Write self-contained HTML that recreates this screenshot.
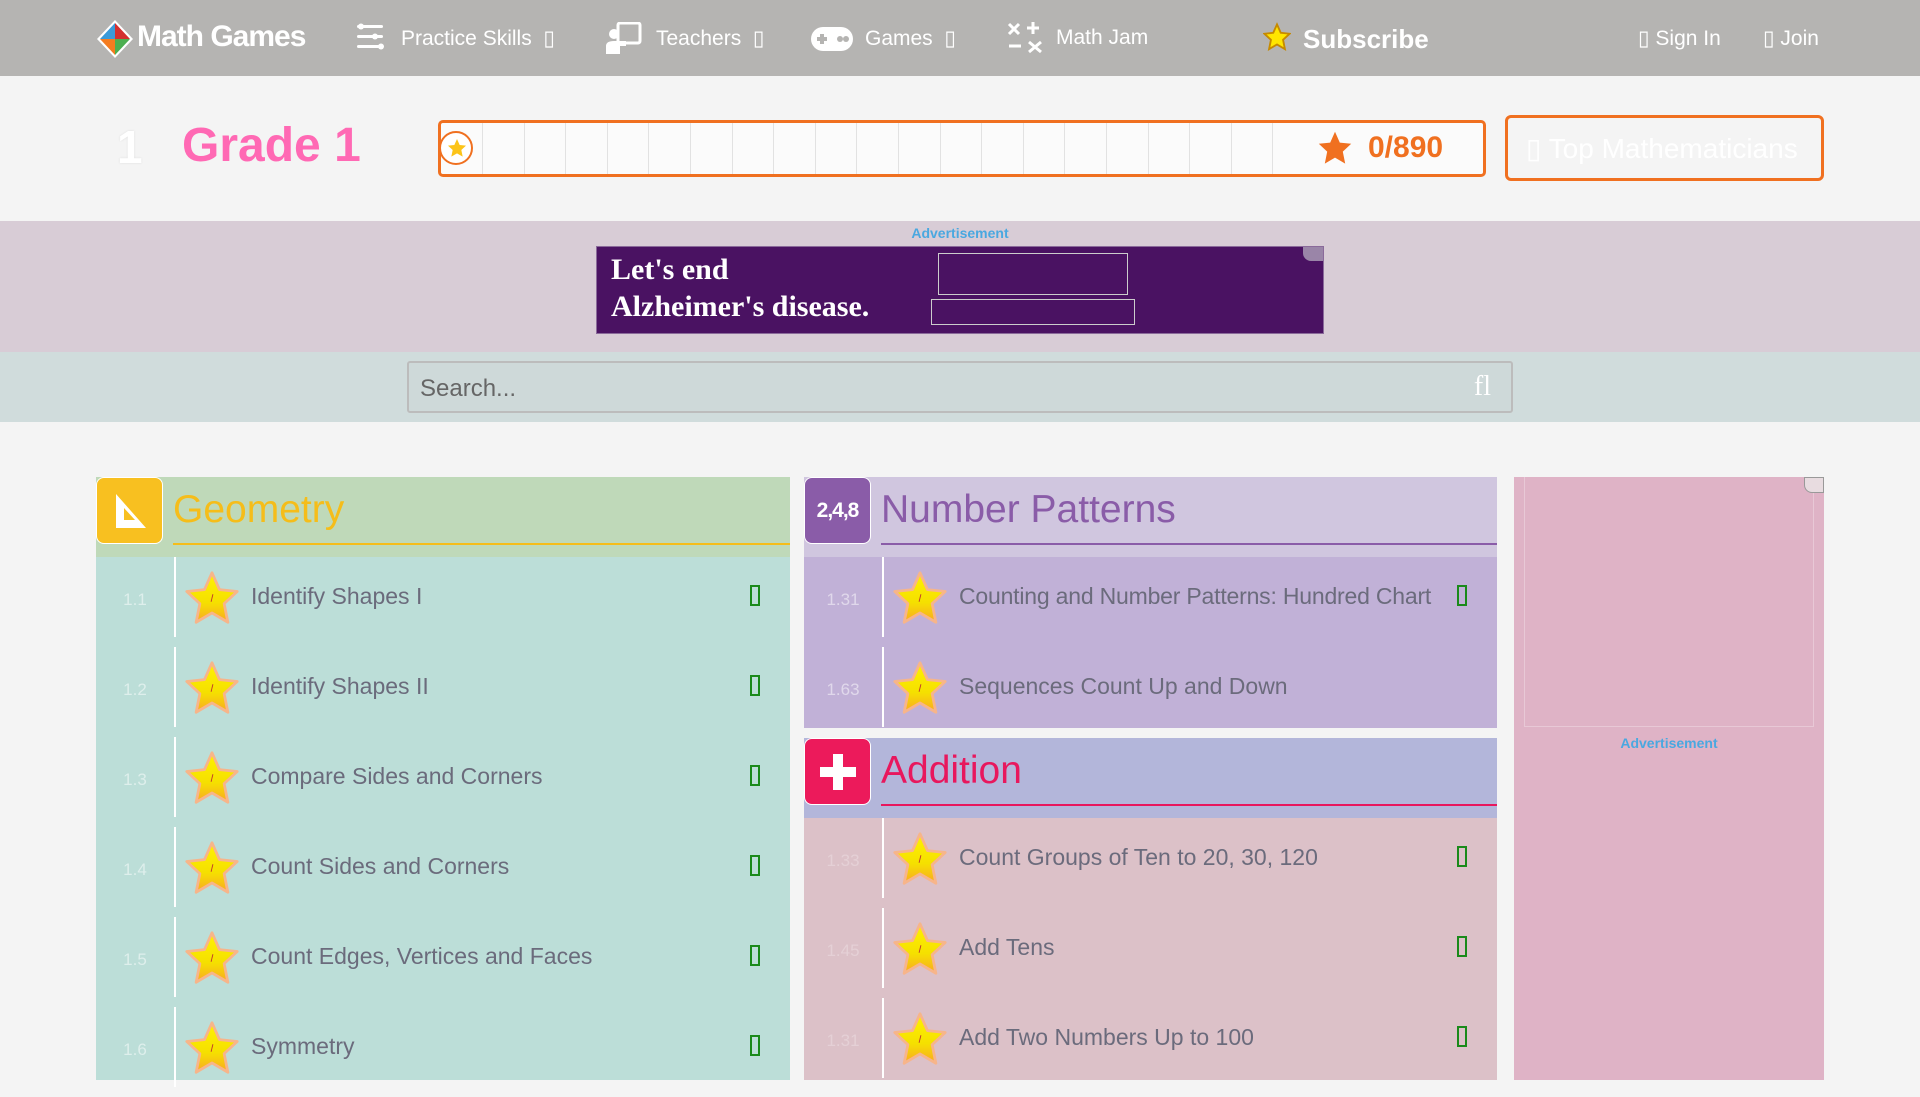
<!DOCTYPE html>
<html><head><meta charset="utf-8"><style>
*{margin:0;padding:0;box-sizing:border-box}
body{width:1920px;height:1080px;overflow:hidden;background:#f4f4f4;font-family:"Liberation Sans",sans-serif;position:relative}
.a{position:absolute}
.nav{left:0;top:0;width:1920px;height:76px;background:#b5b4b2;color:#fff;font-size:21px}
.nav span{position:absolute;top:26px;white-space:nowrap}
.cell{position:absolute;top:0;width:41.6px;height:51px;border-left:1px solid #e2e2e2}
.panel{position:absolute}
.hdr{position:absolute;left:0;top:0;height:80px}
.ico{position:absolute;left:0;top:0;width:67px;height:67px;border-radius:8px;border:1px solid #fff}
.ttl{position:absolute;left:77px;top:11px;font-size:39px}
.uline{position:absolute;left:77px;right:0;top:66px;height:2px}
.row{position:absolute;left:0;height:90px;width:100%}
.row .num{position:absolute;left:0;width:78px;top:33px;text-align:center;font-size:17px;color:rgba(255,255,255,.5)}
.row .ln{position:absolute;left:78px;top:0;width:2px;height:80px;background:#fff}
.row .st{position:absolute;left:88px;top:13px}
.row .tx{position:absolute;left:155px;top:26px;font-size:23px;color:#6b6b7c;white-space:nowrap}
.row .gi{position:absolute;right:30px;top:28px;width:10px;height:21px;border:2px solid #1a8a1a}
</style></head><body>
<svg width="0" height="0" style="position:absolute"><defs>
<linearGradient id="sg" x1="0" y1="0" x2="0" y2="1"><stop offset="0" stop-color="#fff200"/><stop offset=".6" stop-color="#f5e000"/><stop offset="1" stop-color="#f9a825"/></linearGradient>
<symbol id="star" viewBox="0 0 60 60"><path d="M30 3 L38 21 L57 23 L43 36 L47 56 L30 46 L13 56 L17 36 L3 23 L22 21 Z" fill="url(#sg)" stroke="#f7b58a" stroke-width="3" stroke-linejoin="round"/><path d="M31 26 L29 34" stroke="#c0392b" stroke-width="1"/></symbol>
</defs></svg>

<div class="a nav">
 <svg class="a" style="left:96px;top:19px" width="38" height="40" viewBox="0 0 38 40"><path d="M19 1 L37 20 L19 39 L1 20Z" fill="#fff"/><path d="M19 4 L19 20 L4 20Z" fill="#3a9ad9"/><path d="M19 4 L34 20 L19 20Z" fill="#d32f2f"/><path d="M4 20 L19 20 L19 36Z" fill="#f47c20"/><path d="M34 20 L19 20 L19 36Z" fill="#4caf50"/></svg>
 <span style="left:137px;top:20px;font-size:30px;font-weight:bold;letter-spacing:-1px">Math Games</span>
 <svg class="a" style="left:355px;top:22px" width="30" height="30" viewBox="0 0 30 30" fill="#fff"><rect x="2" y="3" width="26" height="3" rx="1.5"/><circle cx="6" cy="4.5" r="3"/><rect x="2" y="13" width="26" height="3" rx="1.5"/><circle cx="20" cy="14.5" r="3"/><rect x="2" y="23" width="26" height="3" rx="1.5"/><circle cx="26" cy="24.5" r="3"/></svg>
 <span style="left:401px">Practice Skills &nbsp;▯</span>
 <svg class="a" style="left:606px;top:22px" width="36" height="32" viewBox="0 0 36 32" fill="#fff"><rect x="12" y="1" width="22" height="20" rx="2" fill="none" stroke="#fff" stroke-width="3"/><circle cx="8" cy="12" r="5"/><path d="M0 32 V24 Q0 19 8 19 H20 V24 H14 V32Z"/></svg>
 <span style="left:656px">Teachers &nbsp;▯</span>
 <svg class="a" style="left:810px;top:26px" width="44" height="26" viewBox="0 0 44 26"><rect x="1" y="1" width="42" height="24" rx="12" fill="#fff"/><rect x="7" y="11" width="10" height="4" fill="#b5b4b2"/><rect x="10" y="8" width="4" height="10" fill="#b5b4b2"/><circle cx="30" cy="13" r="3" fill="#b5b4b2"/><circle cx="36" cy="13" r="3" fill="#b5b4b2"/></svg>
 <span style="left:865px">Games &nbsp;▯</span>
 <svg class="a" style="left:1005px;top:20px" width="40" height="36" viewBox="0 0 40 36" fill="none" stroke="#fff" stroke-width="3"><path d="M4 4 L14 14 M14 4 L4 14 M22 8 H34 M28 2 V14 M4 26 H16 M24 22 L36 32 M36 22 L24 32"/></svg>
 <span style="left:1056px">Math Jam</span>
 <svg class="a" style="left:1263px;top:22px" width="28" height="30" viewBox="0 0 60 60"><path d="M30 3 L38 21 L57 23 L43 36 L47 56 L30 46 L13 56 L17 36 L3 23 L22 21 Z" fill="#ffe600" stroke="#c68a00" stroke-width="4"/></svg>
 <span style="left:1303px;top:24px;font-size:26px;font-weight:bold">Subscribe</span>
 <span style="left:1638px">▯ Sign In</span>
 <span style="left:1763px">▯ Join</span>
</div>

<div class="a" style="left:117px;top:120px;font-size:46px;font-weight:bold;color:#fff;text-shadow:0 0 2px #ddd">1</div>
<div class="a" style="left:182px;top:118px;font-size:48px;font-weight:bold;color:#ff69b4">Grade 1</div>
<div class="a" style="left:438px;top:120px;width:1048px;height:57px;border:3px solid #f07020;border-radius:5px;background:rgba(255,255,255,.6)">
 <div class="a" style="left:-2px;top:8px;width:34px;height:34px;border:2px solid #f07020;border-radius:50%;background:#fff"><svg class="a" style="left:6px;top:5px" width="20" height="20" viewBox="0 0 60 60"><path d="M30 3 L38 21 L57 23 L43 36 L47 56 L30 46 L13 56 L17 36 L3 23 L22 21 Z" fill="#fcc419"/></svg></div>
 <div class="a" style="left:41px;top:0;width:834px;height:51px">
  <div class="cell" style="left:0"></div><div class="cell" style="left:41.6px"></div><div class="cell" style="left:83.2px"></div><div class="cell" style="left:124.8px"></div><div class="cell" style="left:166.4px"></div><div class="cell" style="left:208px"></div><div class="cell" style="left:249.6px"></div><div class="cell" style="left:291.2px"></div><div class="cell" style="left:332.8px"></div><div class="cell" style="left:374.4px"></div><div class="cell" style="left:416px"></div><div class="cell" style="left:457.6px"></div><div class="cell" style="left:499.2px"></div><div class="cell" style="left:540.8px"></div><div class="cell" style="left:582.4px"></div><div class="cell" style="left:624px"></div><div class="cell" style="left:665.6px"></div><div class="cell" style="left:707.2px"></div><div class="cell" style="left:748.8px"></div><div class="cell" style="left:790.4px"></div>
 </div>
 <svg class="a" style="left:875px;top:7px" width="38" height="36" viewBox="0 0 60 60"><path d="M30 3 L38 21 L57 23 L43 36 L47 56 L30 46 L13 56 L17 36 L3 23 L22 21 Z" fill="#f07020"/></svg>
 <div class="a" style="left:927px;top:8px;font-size:30px;font-weight:bold;color:#f07020">0/890</div>
</div>
<div class="a" style="left:1505px;top:115px;width:319px;height:66px;border:3px solid #f07020;border-radius:6px;color:#fff;font-size:28px;padding:14px 0 0 18px;white-space:nowrap">▯ Top Mathematicians</div>

<div class="a" style="left:0;top:221px;width:1920px;height:131px;background:#d8ccd6"></div>
<div class="a" style="left:0;top:225px;width:1920px;text-align:center;font-size:14px;font-weight:bold;color:#4aa8e0">Advertisement</div>
<div class="a" style="left:596px;top:246px;width:728px;height:88px;background:#4a1262;border:1px solid #8a6a9a">
 <div class="a" style="left:14px;top:4px;font-family:'Liberation Serif',serif;font-weight:bold;font-size:30px;color:#fff;line-height:37px">Let's end<br>Alzheimer's disease.</div>
 <div class="a" style="left:341px;top:6px;width:190px;height:42px;border:1px solid #ccc"></div>
 <div class="a" style="left:334px;top:52px;width:204px;height:26px;border:1px solid #ccc"></div>
 <div class="a" style="right:0;top:0;width:20px;height:14px;background:#9a85a8;border-radius:0 0 0 8px"></div>
</div>
<div class="a" style="left:0;top:352px;width:1920px;height:70px;background:#d0dcdc"></div>
<div class="a" style="left:407px;top:361px;width:1106px;height:52px;border:2px solid #bcbcbc;border-radius:3px;background:#ced9d9">
 <div class="a" style="left:11px;top:12px;font-size:24px;color:#666">Search...</div>
 <div class="a" style="right:20px;top:8px;font-size:28px;color:#fff;font-family:'Liberation Serif',serif">fl</div>
</div>

<!-- Geometry -->
<div class="panel" style="left:96px;top:477px;width:694px;height:603px;background:#bcded8">
 <div class="hdr" style="width:694px;background:#bfd9b9">
  <div class="ico" style="background:#f8c020"><svg class="a" style="left:15px;top:12px" width="38" height="42" viewBox="0 0 38 42"><path d="M4 4 L34 38 H4Z M12 18 V30 H23Z" fill="#fff" fill-rule="evenodd"/></svg></div>
  <div class="ttl" style="color:#f5bd1a">Geometry</div><div class="uline" style="background:#f5bd1a"></div>
 </div>
 <div class="row" style="top:80px"><div class="num">1.1</div><div class="ln"></div><svg class="st" width="56" height="56"><use href="#star"/></svg><div class="tx">Identify Shapes I</div><div class="gi"></div></div>
 <div class="row" style="top:170px"><div class="num">1.2</div><div class="ln"></div><svg class="st" width="56" height="56"><use href="#star"/></svg><div class="tx">Identify Shapes II</div><div class="gi"></div></div>
 <div class="row" style="top:260px"><div class="num">1.3</div><div class="ln"></div><svg class="st" width="56" height="56"><use href="#star"/></svg><div class="tx">Compare Sides and Corners</div><div class="gi"></div></div>
 <div class="row" style="top:350px"><div class="num">1.4</div><div class="ln"></div><svg class="st" width="56" height="56"><use href="#star"/></svg><div class="tx">Count Sides and Corners</div><div class="gi"></div></div>
 <div class="row" style="top:440px"><div class="num">1.5</div><div class="ln"></div><svg class="st" width="56" height="56"><use href="#star"/></svg><div class="tx">Count Edges, Vertices and Faces</div><div class="gi"></div></div>
 <div class="row" style="top:530px"><div class="num">1.6</div><div class="ln"></div><svg class="st" width="56" height="56"><use href="#star"/></svg><div class="tx">Symmetry</div><div class="gi"></div></div>
</div>

<!-- Number Patterns -->
<div class="panel" style="left:804px;top:477px;width:693px;height:251px;background:#c1b1d7">
 <div class="hdr" style="width:693px;background:#d0c6df">
  <div class="ico" style="background:#8a5ca8;color:#fff;font-weight:bold;font-size:21px;text-align:center;line-height:65px;letter-spacing:-1px">2,4,8</div>
  <div class="ttl" style="color:#8a5ca8">Number Patterns</div><div class="uline" style="background:#8a5ca8"></div>
 </div>
 <div class="row" style="top:80px"><div class="num">1.31</div><div class="ln"></div><svg class="st" width="56" height="56"><use href="#star"/></svg><div class="tx" style="letter-spacing:-0.2px">Counting and Number Patterns: Hundred Chart</div><div class="gi"></div></div>
 <div class="row" style="top:170px"><div class="num">1.63</div><div class="ln"></div><svg class="st" width="56" height="56"><use href="#star"/></svg><div class="tx">Sequences Count Up and Down</div></div>
</div>

<!-- Addition -->
<div class="panel" style="left:804px;top:738px;width:693px;height:342px;background:#dcc1c8">
 <div class="hdr" style="width:693px;background:#b3b6da">
  <div class="ico" style="background:#ec1a5b"><svg class="a" style="left:13px;top:13px" width="40" height="40" viewBox="0 0 40 40"><path d="M15 2 H25 V15 H38 V25 H25 V38 H15 V25 H2 V15 H15Z" fill="#fff"/></svg></div>
  <div class="ttl" style="color:#e8175d">Addition</div><div class="uline" style="background:#e8175d"></div>
 </div>
 <div class="row" style="top:80px"><div class="num" style="color:rgba(255,255,255,.25)">1.33</div><div class="ln"></div><svg class="st" width="56" height="56"><use href="#star"/></svg><div class="tx">Count Groups of Ten to 20, 30, 120</div><div class="gi"></div></div>
 <div class="row" style="top:170px"><div class="num" style="color:rgba(255,255,255,.25)">1.45</div><div class="ln"></div><svg class="st" width="56" height="56"><use href="#star"/></svg><div class="tx">Add Tens</div><div class="gi"></div></div>
 <div class="row" style="top:260px"><div class="num" style="color:rgba(255,255,255,.25)">1.31</div><div class="ln"></div><svg class="st" width="56" height="56"><use href="#star"/></svg><div class="tx">Add Two Numbers Up to 100</div><div class="gi"></div></div>
</div>

<!-- Right ad -->
<div class="a" style="left:1514px;top:477px;width:310px;height:603px;background:#dfb3c6">
 <div class="a" style="left:10px;top:0;width:290px;height:250px;border:1px solid #e8c8d6;border-top:0"></div>
 <div class="a" style="right:0;top:0;width:20px;height:16px;background:#e8dce0;border-radius:0 0 0 8px;border:1px solid #999"></div>
 <div class="a" style="left:0;top:258px;width:310px;text-align:center;font-size:14px;font-weight:bold;color:#4aa8e0">Advertisement</div>
</div>
</body></html>
